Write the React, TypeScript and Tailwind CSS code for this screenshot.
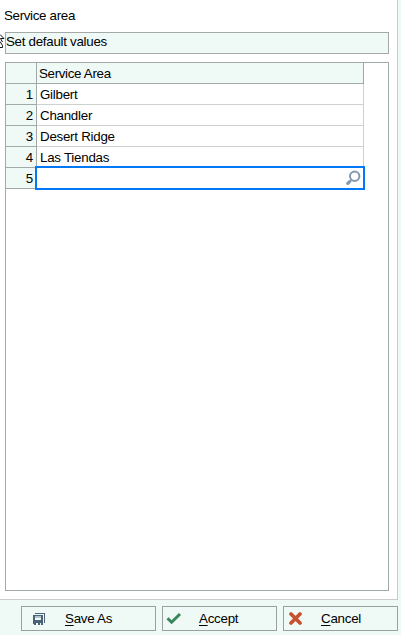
import type { ReactNode } from "react";

const rows = ["Gilbert", "Chandler", "Desert Ridge", "Las Tiendas"];

function SearchIcon() {
  return (
    <svg width="15" height="16" viewBox="0 0 15 16" fill="none" stroke="#8499ad">
      <circle cx="8.7" cy="6.3" r="4.7" strokeWidth="2" />
      <path d="M5.2 10 4 11.2" strokeWidth="2" />
      <path d="M3.6 11.6 1.8 13.4" strokeWidth="3.2" strokeLinecap="round" />
    </svg>
  );
}

function SaveIcon() {
  return (
    <svg width="12" height="12" viewBox="0 0 12 12" shapeRendering="crispEdges">
      <path d="M2 0h10v10h-1V1H2z" fill="#4a6378" />
      <path d="M0 2h10v10H8v-2H7v2H5v-2H3v2H1v-1H0zM2 3v4h6V3z" fill="#4a6378" fillRule="evenodd" />
      <path d="M2 3h6v2H2z" fill="#b5c3ca" />
    </svg>
  );
}

function CheckIcon() {
  return (
    <svg width="16" height="13" viewBox="0 0 16 13" fill="none">
      <path d="M1.5 6.2 5.6 10.2 14 2" stroke="#37865e" strokeWidth="3" />
    </svg>
  );
}

function CrossIcon() {
  return (
    <svg width="13" height="13" viewBox="0 0 13 13" fill="none">
      <path d="M2 2 11 11M11 2 2 11" stroke="#c8512f" strokeWidth="3.7" strokeLinecap="round" />
    </svg>
  );
}

function ActionButton({ icon, hotkey, label, className, iconClass }: {
  icon: ReactNode;
  hotkey: string;
  label: string;
  className: string;
  iconClass: string;
}) {
  return (
    <button className={`flex h-[25px] shrink-0 items-center border border-[#9b9f9e] bg-[#eff9f6] tracking-[-0.25px] ${className}`}>
      <span className={`flex shrink-0 ${iconClass}`}>{icon}</span>
      <span className="whitespace-nowrap leading-4">
        <span className="underline decoration-1 underline-offset-2">{hotkey}</span>
        {label}
      </span>
    </button>
  );
}

export default function App() {
  return (
    <div className="relative flex h-[635px] w-[401px] flex-col overflow-hidden bg-[#eff9f6] font-['Liberation_Sans',Arial,sans-serif] text-[13.333px] leading-4 tracking-[-0.25px] text-black">
      <main className="flex h-[600px] w-[398px] flex-col border-r border-b border-[#cbcbcb] bg-white pl-[5px]">
        <h1 className="-ml-px h-8 pt-2 tracking-[-0.32px]">Service area</h1>
        <div className="h-[22px] w-[384px] border border-[#a5a9a8] bg-[#eff9f6] pt-px tracking-[-0.28px]">Set default values</div>
        <section className="mt-2 h-[529px] w-[384px] border border-[#a2aaa9]">
          <div className="flex h-[21px] w-[358px] border-r border-b border-[#a2aaa9] bg-[#eff9f6]">
            <div className="w-[31px] border-r border-[#a2aaa9]" />
            <div className="pt-[3px] pl-0.5 tracking-[-0.32px]">Service Area</div>
          </div>
          {rows.map((name, i) => (
            <div key={name} className="flex h-[21px] w-[358px]">
              <div className="w-[31px] border-r border-b border-[#a2aaa9] bg-[#eff9f6] pt-[3px] pr-[3px] text-right">{i + 1}</div>
              <div className="flex-1 border-r border-b border-[#cdd2d1] pt-[3px] pl-[3px]">{name}</div>
            </div>
          ))}
          <div className="flex h-[21px]">
            <div className="w-[31px] border-r border-b border-[#a2aaa9] bg-[#eff9f6] pt-[3px] pr-[3px] text-right">5</div>
            <div className="relative -mt-[2px] -ml-[2px] flex h-6 w-[330px] items-start justify-end border-2 border-[#0078f8] bg-white pt-0.5 pr-0.5">
              <SearchIcon />
            </div>
          </div>
        </section>
      </main>
      <footer className="flex gap-1.5 pt-1.5 pl-[21px]">
        <ActionButton icon={<SaveIcon />} hotkey="S" label="ave As" className="w-[135px]" iconClass="w-[43px] pl-[11px]" />
        <ActionButton icon={<CheckIcon />} hotkey="A" label="ccept" className="w-[115px]" iconClass="w-9 pl-[3px]" />
        <ActionButton icon={<CrossIcon />} hotkey="C" label="ancel" className="w-[115px]" iconClass="w-[37px] pl-[5px]" />
      </footer>
      <svg className="absolute top-[34px] left-0" width="5" height="15" viewBox="0 0 5 15" fill="none" stroke="#111">
        <path d="M0 .5 4 4.5H.5L2.5 8M0 7.5 2.5 11.5V13.5H0" />
      </svg>
    </div>
  );
}
